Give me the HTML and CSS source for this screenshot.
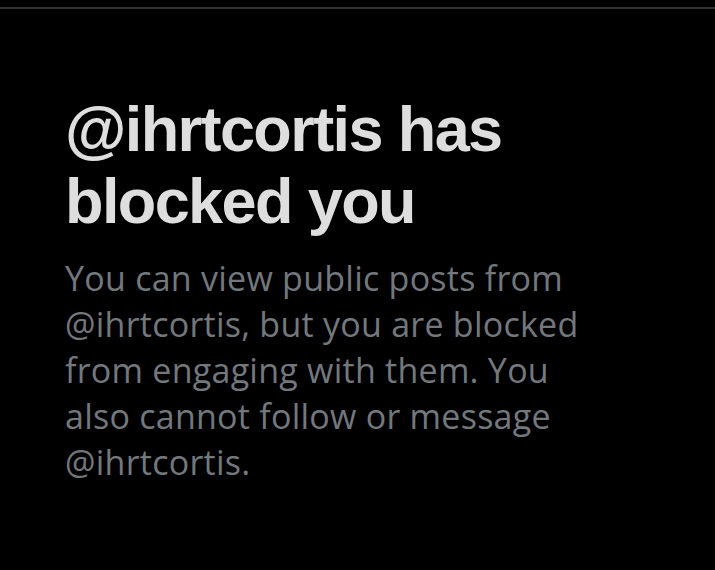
FILE: index.html
```html
<!DOCTYPE html>
<html>
<head>
<meta charset="utf-8">
<link rel="stylesheet" href="styles.css">
</head>
<body>
<div class="screen">
  <div class="divider"></div>
  <main class="content">
    <h1 class="title">@ihrtcortis has blocked you</h1>
    <p class="desc">You can view public posts from @ihrtcortis, but you are blocked from engaging with them. You also cannot follow or message @ihrtcortis.</p>
  </main>
</div>
</body>
</html>
```

FILE: styles.css
```css
html, body {
  margin: 0;
  padding: 0;
  background: #000;
}
.screen {
  width: 715px;
  height: 570px;
  background: #000;
  overflow: hidden;
  padding-top: 7px;
  box-sizing: border-box;
}
.divider {
  height: 2px;
  background: #2f3336;
}
.content {
  padding: 84px 40px 0 65px;
}
.title {
  margin: 0;
  font-family: "Liberation Sans", Arial, sans-serif;
  font-weight: 700;
  font-size: 63px;
  line-height: 72px;
  color: #dedede;
  width: 540px;
  letter-spacing: -1.6px;
}
.desc {
  margin: 18px 0 0;
  font-family: "Open Sans", sans-serif;
  font-size: 34px;
  line-height: 46px;
  letter-spacing: 0.25px;
  color: #73787d;
  width: 530px;
}
```
